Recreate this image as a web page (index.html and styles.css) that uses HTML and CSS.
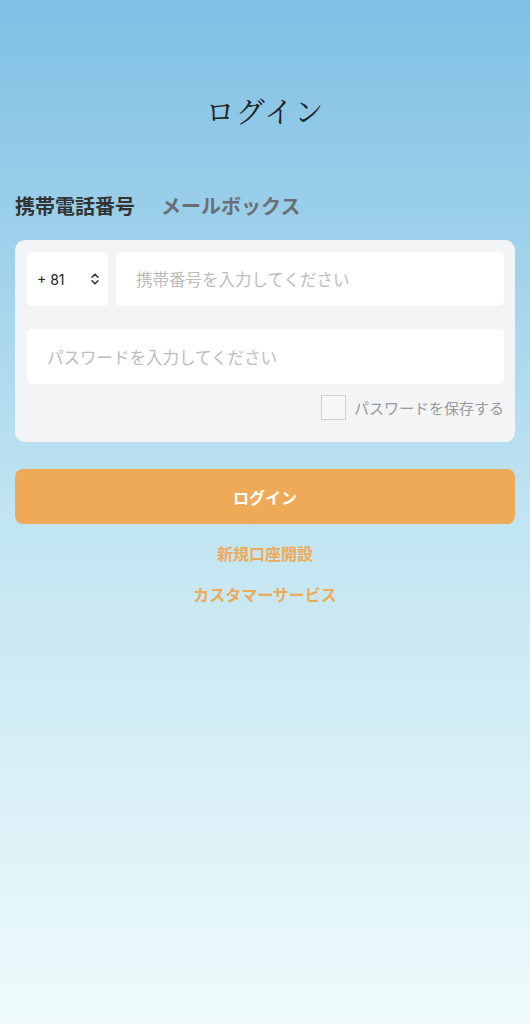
FILE: index.html
```html
<!DOCTYPE html>
<html lang="ja">
<head>
  <meta charset="UTF-8">
  <meta name="viewport" content="width=device-width, initial-scale=1.0">
  <title>ログイン</title>
  <link rel="stylesheet" href="styles.css">
</head>
<body>

<div class="page">
  <h1 class="title">ログイン</h1>

  <div class="tabs">
    <span class="tab active">携帯電話番号</span>
    <span class="tab">メールボックス</span>
  </div>

  <div class="card">
    <div class="row">
      <div class="code">
        <span>+ 81</span>
        <svg width="10" height="14" viewBox="0 0 10 14" fill="none" stroke="#333" stroke-width="1.6" stroke-linecap="round" stroke-linejoin="round">
          <path d="M2 5.2 L5 2.2 L8 5.2"/>
          <path d="M2 8.8 L5 11.8 L8 8.8"/>
        </svg>
      </div>
      <input class="field phone" type="text" placeholder="携帯番号を入力してください">
    </div>
    <input class="field pass" type="password" placeholder="パスワードを入力してください">
    <label class="remember">
      <span class="box"></span>
      <span>パスワードを保存する</span>
    </label>
  </div>

  <button class="login-btn">ログイン</button>
  <a class="link" href="#">新規口座開設</a>
  <a class="link" href="#">カスタマーサービス</a>
</div>

</body>
</html>
```

FILE: styles.css
```css
html, body {
  height: 100%;
}
body {
  margin: 0;
  font-family: "Noto Sans CJK JP", "Noto Sans", sans-serif;
  background: linear-gradient(180deg, #7fc0e4 0%, #c0e4f2 50%, #effbfb 100%);
  min-height: 1024px;
}
.page {
  padding: 0 15px;
}
.title {
  margin: 0;
  padding-top: 90px;
  height: 42px;
  line-height: 42px;
  text-align: center;
  font-family: "Noto Serif CJK JP", "IPAMincho", serif;
  font-weight: 400;
  font-size: 29px;
  color: #222;
  letter-spacing: 1px;
}
.tabs {
  display: flex;
  gap: 26px;
  margin-top: 58px;
  height: 30px;
  align-items: center;
}
.tab {
  font-size: 20px;
  font-weight: 700;
  color: #6b6e74;
}
.tab.active {
  color: #333;
}
.card {
  margin-top: 20px;
  background-color: #f3f4f6;
  border-radius: 10px;
  padding: 12px 11px 22px 12px;
}
.row {
  display: flex;
  gap: 8px;
}
.code {
  width: 81px;
  height: 54px;
  box-sizing: border-box;
  background: #fff;
  border-radius: 5px;
  display: flex;
  align-items: center;
  justify-content: space-between;
  padding: 0 8px 0 10px;
  font-family: "Inter", "Noto Sans", sans-serif;
  font-size: 14px;
  color: #222;
}
.field {
  height: 55px;
  box-sizing: border-box;
  border: none;
  outline: none;
  background: #fff;
  border-radius: 5px;
  padding: 0 20px;
  font-family: "Noto Sans CJK JP", sans-serif;
  font-size: 16.5px;
  color: #333;
}
.field::placeholder {
  color: #bcbcbc;
}
.phone {
  flex: 1;
  height: 54px;
}
.pass {
  display: block;
  width: 100%;
  margin-top: 23px;
}
.remember {
  display: flex;
  justify-content: flex-end;
  align-items: center;
  gap: 8px;
  margin-top: 11px;
  font-size: 15px;
  color: #9a9a9a;
}
.box {
  width: 23px;
  height: 23px;
  border: 1px solid #cfcfcf;
  background: #f7f7f7;
}
.login-btn {
  display: block;
  width: 100%;
  height: 55px;
  margin-top: 27px;
  border: none;
  border-radius: 8px;
  background-color: #eeaa57;
  color: #fff;
  font-family: "Noto Sans CJK JP", sans-serif;
  font-size: 16px;
  font-weight: 700;
  cursor: pointer;
}
.link {
  display: block;
  text-align: center;
  color: #eeaa57;
  font-size: 16px;
  font-weight: 700;
  text-decoration: none;
  line-height: 24px;
}
.login-btn + .link {
  margin-top: 17px;
}
.link + .link {
  margin-top: 17px;
}
```
